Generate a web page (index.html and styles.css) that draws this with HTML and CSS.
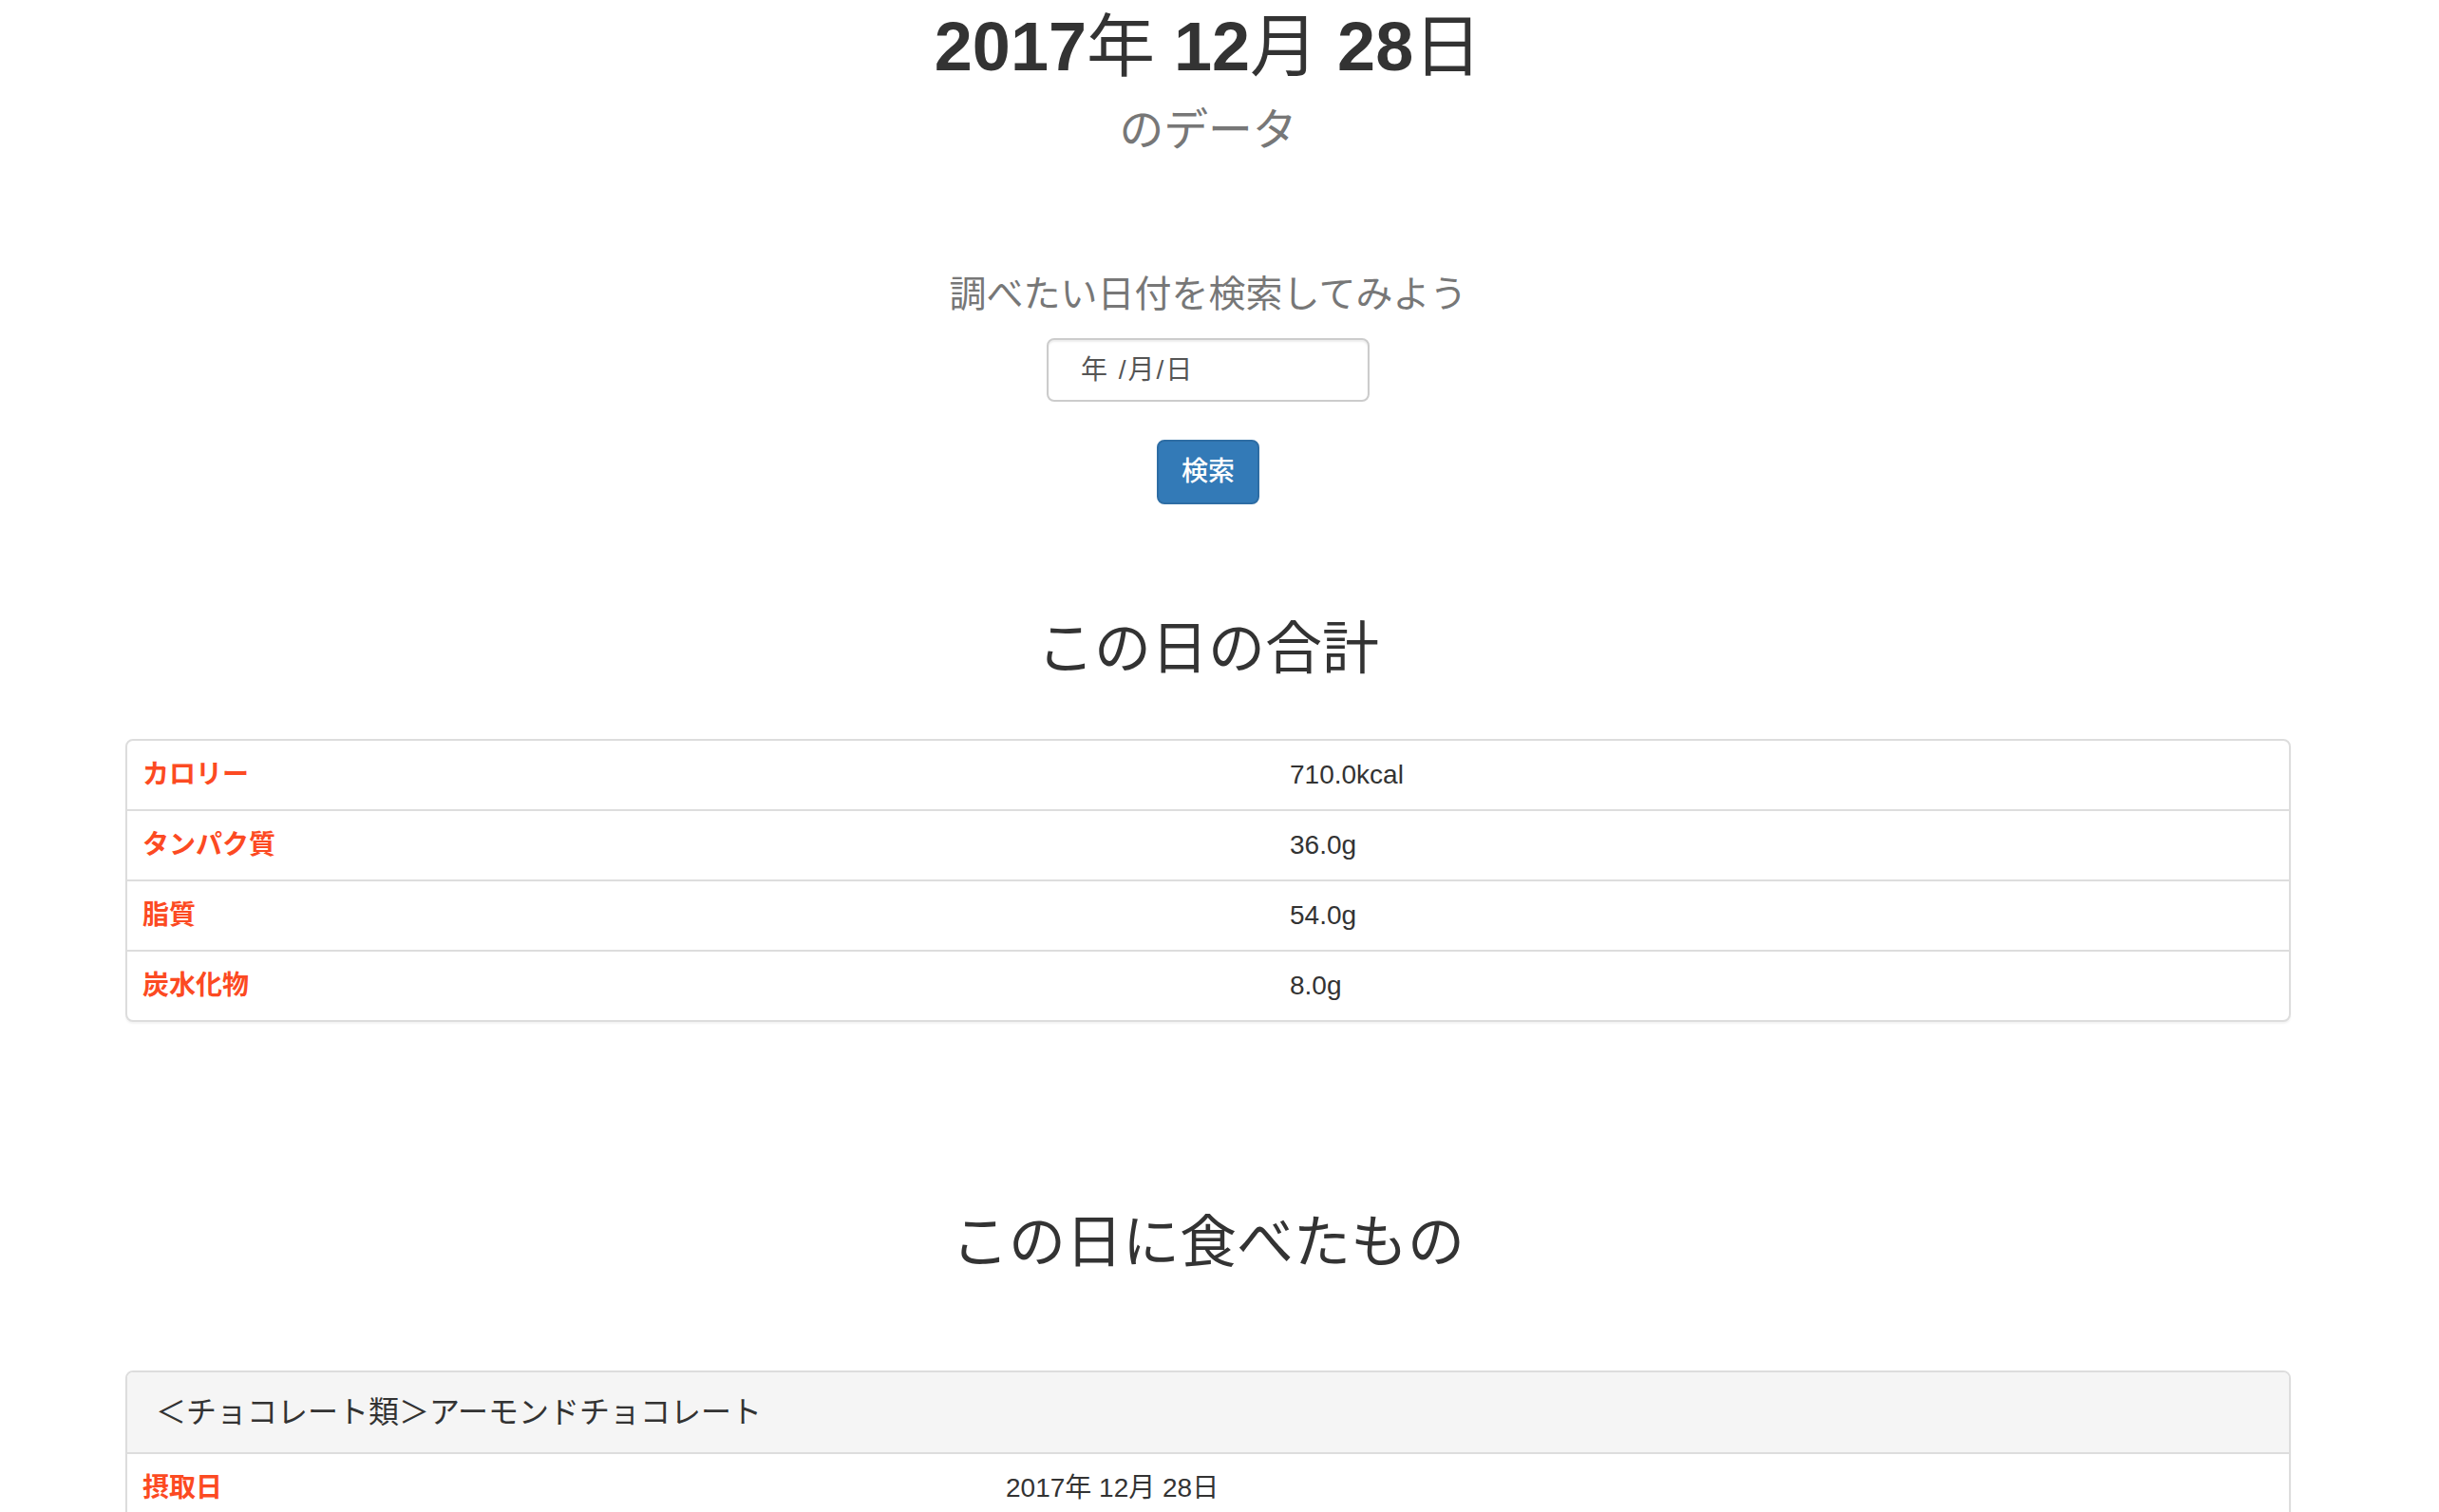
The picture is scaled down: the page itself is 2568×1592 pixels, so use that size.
FILE: index.html
```html
<!DOCTYPE html>
<html lang="ja">
<head>
<meta charset="utf-8">
<title>2017年 12月 28日のデータ</title>
<link rel="stylesheet" href="styles.css">
</head>
<body>
<div class="page">
  <div class="container">
    <h1 class="title"><span class="num">2017</span>年 <span class="num">12</span>月 <span class="num">28</span>日<br><small>のデータ</small></h1>

    <form class="search">
      <p class="search-lead">調べたい日付を検索してみよう</p>
      <div class="date-input">年 /月/日</div>
      <button type="button" class="btn-search">検索</button>
    </form>

    <h2 class="section-title first">この日の合計</h2>
    <div class="panel">
      <table class="data-table totals">
        <tr><th class="label">カロリー</th><td>710.0kcal</td></tr>
        <tr><th class="label">タンパク質</th><td>36.0g</td></tr>
        <tr><th class="label">脂質</th><td>54.0g</td></tr>
        <tr><th class="label">炭水化物</th><td>8.0g</td></tr>
      </table>
    </div>

    <h2 class="section-title second">この日に食べたもの</h2>
    <div class="panel foods-panel">
      <div class="panel-heading">＜チョコレート類＞アーモンドチョコレート</div>
      <table class="data-table foods">
        <tr><th class="label">摂取日</th><td>2017年 12月 28日</td></tr>
        <tr><th class="label">カロリー</th><td>710.0kcal</td></tr>
      </table>
    </div>
  </div>
</div>
</body>
</html>
```

FILE: styles.css
```css
html, body {
  margin: 0;
  padding: 0;
  background: #fff;
}

body {
  font-family: "Liberation Sans", "Noto Sans CJK JP", sans-serif;
  font-size: 28px;
  line-height: 40px;
  color: #333;
}

.page {
  width: 2544px;
}

.container {
  width: 2280px;
  margin: 0 auto;
  padding: 0 30px;
}

.title {
  margin: 10px 0 0;
  text-align: center;
  font-size: 72px;
  line-height: 79px;
  font-weight: 400;
  color: #333;
}

.title .num {
  font-weight: 700;
}

.title small {
  font-size: 65%;
  font-weight: 400;
  color: #777;
}

.search {
  display: flex;
  flex-direction: column;
  align-items: center;
}

.search-lead {
  margin: 105px 0 0;
  font-size: 39px;
  line-height: 56px;
  color: #777;
}

.date-input {
  box-sizing: border-box;
  margin-top: 18px;
  width: 340px;
  height: 67px;
  padding: 0 0 0 34px;
  border: 2px solid #ccc;
  border-radius: 8px;
  box-shadow: inset 0 2px 2px rgba(0, 0, 0, .075);
  font-size: 28px;
  line-height: 63px;
  letter-spacing: 2px;
  color: #555;
  text-align: left;
}

.btn-search {
  box-sizing: border-box;
  margin-top: 40px;
  width: 108px;
  height: 68px;
  padding: 0;
  border: 2px solid #2e6da4;
  border-radius: 8px;
  background: #337ab7;
  color: #fff;
  font-family: "Liberation Sans", "Noto Sans CJK JP", sans-serif;
  font-size: 28px;
  font-weight: 500;
  line-height: 40px;
}

.section-title {
  margin: 0;
  text-align: center;
  font-size: 60px;
  line-height: 66px;
  font-weight: 400;
  color: #333;
}

.section-title.first {
  margin-top: 120px;
  margin-bottom: 61px;
}

.section-title.second {
  margin-top: 200px;
  margin-bottom: 101px;
}

.panel {
  border: 2px solid #ddd;
  border-radius: 8px;
  box-shadow: 0 2px 2px rgba(0, 0, 0, .05);
  overflow: hidden;
  background: #fff;
}

.panel-heading {
  padding: 20px 30px;
  background: #f5f5f5;
  border-bottom: 2px solid #ddd;
  font-size: 32px;
  line-height: 44px;
  color: #333;
}

.data-table {
  width: 100%;
  border-collapse: collapse;
}

.data-table th,
.data-table td {
  padding: 16px 16px 16px;
  text-align: left;
  vertical-align: top;
  line-height: 40px;
  border-top: 2px solid #ddd;
}

.data-table tr:first-child th,
.data-table tr:first-child td {
  border-top: 0;
}

.data-table .label {
  font-weight: 700;
  color: #fc4a22;
}

.totals .label {
  width: 1176px;
}

.foods .label {
  width: 877px;
}
```
